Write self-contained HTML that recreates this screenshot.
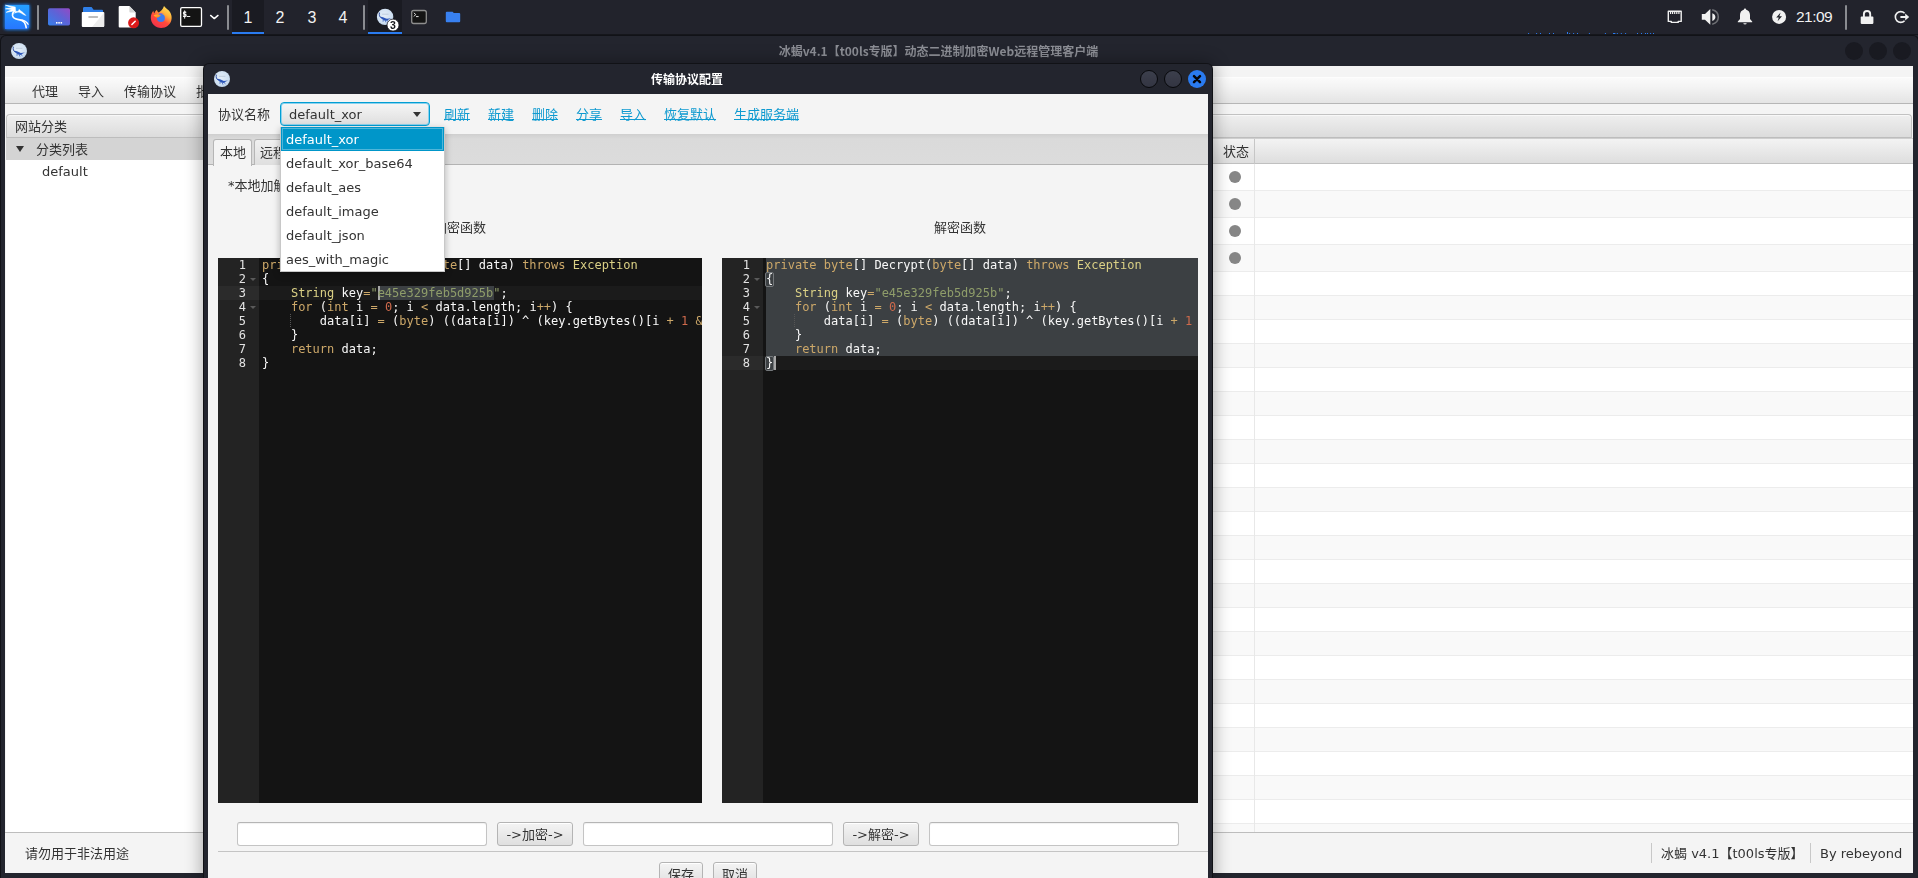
<!DOCTYPE html>
<html lang="zh-CN">
<head>
<meta charset="utf-8">
<title>冰蝎v4.1</title>
<style>
*{box-sizing:border-box;margin:0;padding:0}
html,body{width:1918px;height:878px;overflow:hidden;background:#23252e}
body{position:relative;font-family:"DejaVu Sans","Liberation Sans","Noto Sans CJK SC",sans-serif;font-size:13px;color:#333;line-height:1}
.abs{position:absolute}
.t{position:absolute;white-space:nowrap;line-height:20px;height:20px;padding-top:1px}
/* ---------- top panel ---------- */
#panel{position:absolute;left:0;top:0;width:1918px;height:35px;background:#22232c;border-bottom:1px solid #15161b}
.psep{position:absolute;top:5px;width:2px;height:25px;background:#8a8c91;border-radius:1px}
.ws{position:absolute;top:0;height:34px;width:32px;color:#f2f2f2;font-family:"Liberation Sans","DejaVu Sans",sans-serif;font-size:16px;line-height:36px;text-align:center}
.ws.on{background:#1a1b22;border-bottom:2px solid #2a7bf0;}
#clock{position:absolute;left:1796px;top:0;height:34px;line-height:33px;color:#f2f2f2;font-family:"Liberation Sans","DejaVu Sans",sans-serif;font-size:15.5px;letter-spacing:-0.55px}
/* ---------- main window ---------- */
#mw{position:absolute;left:1px;top:36px;width:1917px;height:842px;background:#23252e;border-radius:5px 5px 0 0;box-shadow:0 0 0 1px #111217}
#mwtitle{position:absolute;left:-1px;top:0;width:1918px;height:30px;text-align:center;color:#8c8e95;font-family:"Noto Sans CJK SC","Liberation Sans",sans-serif;font-weight:bold;font-size:12px;line-height:30px;padding-right:41px}
.wbtn{position:absolute;width:18px;height:18px;border-radius:50%}
#mc{position:absolute;left:4px;top:30px;width:1908px;height:807px;background:#f4f4f4;overflow:hidden}
#menubar{position:absolute;left:0;top:11px;width:1908px;height:27px;background:linear-gradient(#fbfbfb,#f3f3f3 40%,#e4e4e4);border-bottom:1px solid #b6b6b6;box-shadow:inset 0 1px 0 #fdfdfd}
.mi{position:absolute;top:5px;line-height:20px;white-space:nowrap}
.tph{position:absolute;top:48px;height:24px;background:linear-gradient(#efefef,#dcdcdc);border:1px solid #c2c2c2;border-bottom-color:#bdbdbd;box-shadow:inset 0 1px 0 #f8f8f8}
#tree{position:absolute;left:1px;top:72px;width:300px;height:695px;background:#fff}
#table{position:absolute;left:1208px;top:72px;width:700px;height:695px;background:#fff;overflow:hidden}
#thead{position:absolute;left:0;top:0;width:700px;height:26px;background:linear-gradient(#f3f3f3,#dedede);border-bottom:1px solid #c0c0c0;border-top:1px solid #cfcfcf}
.row{position:absolute;left:0;width:700px;border-bottom:1px solid #ececec}
.row.odd{background:#f9f9f9}
.dot{position:absolute;left:16px;top:6.5px;width:12px;height:12px;border-radius:50%;background:#868686}
#status{position:absolute;left:0;top:766px;width:1908px;height:41px;background:#f4f4f4;border-top:1px solid #bdbdbd}
/* ---------- dialog ---------- */
#dlg{position:absolute;left:204px;top:64px;width:1008px;height:820px;background:#23252e;border-radius:5px 5px 0 0;box-shadow:0 0 17px 2px rgba(0,0,0,.32), 0 0 0 1px #15161b}
#dtitle{position:absolute;left:0;top:0;width:1009px;height:30px;text-align:center;color:#fff;font-family:"Noto Sans CJK SC","Liberation Sans",sans-serif;font-weight:bold;font-size:12px;line-height:30px;padding-right:43px}
#dc{position:absolute;left:4px;top:30px;width:1000px;height:790px;background:#f4f4f4;overflow:hidden}
#tabhdr{position:absolute;left:0;top:40px;width:1000px;height:31px;background:linear-gradient(#cfcfcf,#dadada 5px,#dcdcdc);border-bottom:1px solid #b3b3b3}
.tab{position:absolute;top:5px;height:26px;border:1px solid #b6b6b6;border-bottom:none;border-radius:3px 3px 0 0;background:linear-gradient(#f0f0f0,#dfdfdf);line-height:26px;text-align:center}
.tab.sel{background:#f4f4f4;height:27px}
a.lk{position:absolute;top:11px;line-height:20px;color:#0f9ad0;text-decoration:underline;text-decoration-thickness:1px;text-underline-offset:0px;white-space:nowrap}
#combo{position:absolute;left:72px;top:8px;width:150px;height:24px;border-radius:4px;border:1.5px solid #039ed3;box-shadow:0 0 0 1px #8ad2ee inset;background:linear-gradient(#f6f6f6,#dedede);line-height:23px;padding-left:8px}
.ed{position:absolute;top:164px;height:545px;background:#141414;overflow:hidden;font-family:"DejaVu Sans Mono","Liberation Mono",monospace;font-size:12px;color:#f8f8f8}
.gut{position:absolute;left:0;top:0;width:41px;height:545px;background:#232323;color:#e2e2e2}
.ln{position:absolute;left:0;width:28px;text-align:right;height:14px;line-height:14px;will-change:transform}
.fold{position:absolute;left:32px;width:0;height:0;border-left:3px solid transparent;border-right:3px solid transparent;border-top:3px solid #5a5a5a}
.cl{position:absolute;left:44px;height:14px;line-height:14px;white-space:pre;will-change:transform}
.k{color:#cda869}.s{color:#8f9d6a}.n{color:#cf6a4c}.f{color:#dad085}
.sel{position:absolute;background:#3c4043}
.tf{position:absolute;top:728px;height:24px;width:250px;background:#fff;border:1px solid #c4c4c4;border-top-color:#b5b5b5;border-radius:3px;box-shadow:inset 0 1px 1px rgba(0,0,0,.06)}
.btn{position:absolute;height:24px;border:1px solid #b4b4b4;border-radius:3px;background:linear-gradient(#f4f4f4,#dfdfdf);text-align:center;line-height:23px;white-space:nowrap;box-shadow:inset 0 1px 0 #fff}
#pop{position:absolute;left:280px;top:127px;width:165px;height:145px;background:#fff;border:1px solid #c8c8c8;box-shadow:0 2px 7px rgba(0,0,0,.28)}
.pi{position:absolute;left:0;width:163px;height:24px;line-height:23px;padding-left:5px;white-space:nowrap}
.pi.on{margin-top:-1px;height:24px;line-height:26px;background:#0096c9;color:#fff;box-shadow:inset 0 0 0 1px #0096c9, inset 0 0 0 2px #4fb6da}
</style>
</head>
<body>

<!-- ================= TOP PANEL ================= -->
<div id="panel">
  <div class="psep" style="left:37px"></div>
  <div class="psep" style="left:227px"></div>
  <div class="psep" style="left:363px"></div>
  <div class="psep" style="left:1845px"></div>
  <div class="ws on" style="left:232px">1</div>
  <div class="ws" style="left:264px">2</div>
  <div class="ws" style="left:296px">3</div>
  <div class="ws" style="left:327px">4</div>
  <div class="ws on" style="left:368px;width:34px"></div>
  <div id="clock">21:09</div>
  <!--PANEL-ICONS--><svg class="abs" style="left:0;top:0;will-change:transform" width="480" height="36" viewBox="0 0 480 36"><defs>
<radialGradient id="disc" cx="45%" cy="40%" r="65%"><stop offset="0" stop-color="#e4eef8"/><stop offset="0.7" stop-color="#cfe0f1"/><stop offset="1" stop-color="#b9cfe6"/></radialGradient>
<linearGradient id="kg" x1="0" y1="0" x2="0" y2="1"><stop offset="0" stop-color="#25a0ff"/><stop offset="1" stop-color="#2777ff"/></linearGradient>
<linearGradient id="dg" x1="0" y1="1" x2="1" y2="0"><stop offset="0" stop-color="#3580ea"/><stop offset="0.55" stop-color="#5f62d6"/><stop offset="1" stop-color="#9549c4"/></linearGradient>
<linearGradient id="fx" x1="0.85" y1="0.05" x2="0.25" y2="1"><stop offset="0" stop-color="#ffe45a"/><stop offset="0.32" stop-color="#ffb03a"/><stop offset="0.6" stop-color="#ff4a3a"/><stop offset="1" stop-color="#f2304e"/></linearGradient>
<linearGradient id="fx2" x1="0" y1="0" x2="1" y2="1"><stop offset="0" stop-color="#ffbd2e"/><stop offset="1" stop-color="#ff7a1a"/></linearGradient>
<filter id="glow" x="-40%" y="-40%" width="180%" height="180%"><feGaussianBlur stdDeviation="1.6"/></filter>
</defs>
<!-- kali menu -->
<rect x="4" y="4" width="26" height="26" rx="3" fill="#1d86ff" filter="url(#glow)" opacity="0.85"/>
<path d="M5,5 H29.2 V26 a3,3 0 0 1 -3,3 H5 Z" fill="url(#kg)"/>
<g fill="none" stroke="#fff" stroke-linecap="round" stroke-linejoin="round">
<path d="M15,7 L5.5,5.2 L12.3,7.8 L5.5,8.8 L11.9,9.6 L6.2,12.3 L14.4,10.9 L15.4,9.6 Z" fill="#fff" stroke-width="0.6"/>
<path d="M15,10.4 C13.2,12 12.3,13.8 12.5,15.4 C12.9,18 15.2,19 17.6,19.4 C20.8,19.9 23.2,20.6 24.5,22.6 C25.6,24.4 26,26.2 26.2,27.7" stroke-width="1.6"/>
<path d="M15.4,10.8 C16.4,11.3 17.3,11.4 18.2,11.2 L19.1,9.2 L20.7,10.7 C21.8,11.4 22.8,12.2 23.6,13 C24.5,13.9 25.4,14.8 26.1,15.6 C25.2,15.5 24.2,15.1 23.2,14.5 C22.2,13.9 21.2,13.2 20.2,12.8 C19.2,12.4 18.2,12.3 17.2,12.4 C16.2,12.5 15.4,12.8 14.7,13.3 Z" fill="#fff" stroke-width="0.3"/>
<path d="M21.8,19.9 C24.4,20.4 26.8,21.8 28.1,24.3" stroke-width="1.25"/>
</g>
<!-- show desktop -->
<rect x="48" y="8.2" width="22" height="17.2" rx="1.6" fill="url(#dg)"/>
<rect x="56" y="22" width="1.5" height="1.6" fill="#fff"/><rect x="58.3" y="22" width="1.5" height="1.6" fill="#fff"/><rect x="60.6" y="22" width="1.5" height="1.6" fill="#fff"/>
<!-- file manager -->
<path d="M83,8.4 a1.4,1.4 0 0 1 1.4,-1.4 H91.6 L93.6,9.8 H102 a1,1 0 0 1 1,1 V13 H83 Z" fill="#2f7fe8"/>
<path d="M81.8,12.8 a0.8,0.8 0 0 1 0.8,-0.8 H103.4 a0.8,0.8 0 0 1 0.8,0.8 V26 a1,1 0 0 1 -1,1 H82.8 a1,1 0 0 1 -1,-1 Z" fill="#fff"/>
<path d="M104.2,12.4 V26 a1,1 0 0 1 -1,1 H92 Z" fill="#ededed"/>
<rect x="88.2" y="16" width="10" height="2" rx="1" fill="#bdbdbd"/>
<!-- text editor -->
<path d="M118.7,7.1 a1,1 0 0 1 1,-1 H129.4 L135.7,12.4 V26.4 a1,1 0 0 1 -1,1 H119.7 a1,1 0 0 1 -1,-1 Z" fill="#fff"/>
<path d="M129.4,6.1 L135.7,12.4 H130.4 a1,1 0 0 1 -1,-1 Z" fill="#d5d5d5"/>
<circle cx="133.6" cy="22.8" r="5.5" fill="#db1a1a"/>
<path d="M131.9,24.5 L135.2,21.2" stroke="#fff" stroke-width="1.5" stroke-linecap="round"/>
<!-- firefox -->
<path d="M164,6 C165.6,8.4 168.4,9.4 170,12 C171.6,14.4 172,17.4 171.4,20 C170.4,24.6 166.2,28 161.2,28 C155.4,28 150.8,23.4 150.8,17.8 C150.8,15 151.8,12.6 153.4,10.8 C153.4,12 153.8,12.8 154.4,13.4 C154.8,11.8 155.8,10.6 157,9.8 C157,11 157.6,12 158.8,12.4 C160.4,11.4 162.8,9.6 164,6 Z" fill="url(#fx)"/>
<circle cx="160.9" cy="18.1" r="4" fill="#3b7cf0"/>
<path d="M153.6,15.2 C155,14.6 156.6,14.4 158,14.6 C159.2,14.8 160.2,15.2 161,15.8 C160,16 159.4,16.4 159,17 C158.2,17.6 157.2,17.8 156.2,17.4 C155.2,17 154.2,16.2 153.6,15.2 Z" fill="url(#fx2)"/>
<path d="M158.6,13.6 C160.2,12.8 162.2,12.8 163.8,13.6 C162.4,13.6 161,14 160,14.6 Z" fill="#7a5be0" opacity=".85"/>
<!-- terminal -->
<rect x="180.7" y="7.6" width="20.8" height="18.7" rx="1.3" fill="#141414" stroke="#fff" stroke-width="1.3"/>
<text transform="translate(182.4,16.9) scale(0.86,1)" font-family="DejaVu Sans Mono,Liberation Mono,monospace" font-weight="bold" font-size="8.4" fill="#fff" stroke="#fff" stroke-width="0.35">$</text><text transform="translate(187.0,15.0) scale(0.62,1)" font-family="DejaVu Sans Mono,Liberation Mono,monospace" font-weight="bold" font-size="8.2" fill="#fff" stroke="#fff" stroke-width="0.3">_</text>
<path d="M210.6,15.4 L214.3,18.6 L218,15.4" fill="none" stroke="#fff" stroke-width="1.4" stroke-linecap="round" stroke-linejoin="round"/>
<!-- task: behinder -->
<g transform="translate(385.1,16.9)">
<circle r="8.2" fill="url(#disc)"/>
<path d="M-5.7,-3.9 C-6.1,-1.6 -5.6,0 -4.2,0.8" fill="none" stroke="#27469b" stroke-width="0.9" stroke-linecap="round"/>
<path d="M-4.7,-0.2 C-2.6,0 -0.2,0.9 1.8,1.9 L6.0,1.4 L3.4,2.7 C3.1,3.6 1.8,4.1 0.4,3.8 C-1.6,3.4 -4.2,1.8 -4.7,-0.2 Z" fill="#2b55b7"/>
<path d="M-1.8,2.8 L-2.0,4.4 M0.2,3.6 L0.8,5.2 M1.8,3.4 L3.2,4.6" stroke="#3560c0" stroke-width="0.8" stroke-linecap="round" fill="none"/>
<path d="M-3,-2.7 H3.4" stroke="#9fb0c4" stroke-width="0.5"/>
</g>
<circle cx="393" cy="25.1" r="6" fill="#fff" stroke="#1a1b22" stroke-width="0.8"/>
<text x="393" y="29" text-anchor="middle" font-family="Liberation Sans,DejaVu Sans,sans-serif" font-weight="bold" font-size="10.5" fill="#16171c">3</text>
<!-- task: terminal -->
<rect x="411.7" y="10.5" width="14.6" height="13" rx="2" fill="#141414" stroke="#8e8e8e" stroke-width="1.3"/>
<path d="M414,12.8 L415.6,14.6 L414,16.4 M416,16.6 H418.6" fill="none" stroke="#fff" stroke-width="0.9"/>
<!-- task: folder -->
<path d="M445.8,12.7 a1,1 0 0 1 1,-1 H452.6 L453.8,13.1 H459.2 a1,1 0 0 1 1,1 V21.2 a1,1 0 0 1 -1,1 H446.8 a1,1 0 0 1 -1,-1 Z" fill="#3880f0"/>
</svg><svg class="abs" style="left:1500px;top:0" width="418" height="36" viewBox="0 0 418 36">
<rect x="28.1" y="33" width="1" height="1" fill="#2a7bf0"/><rect x="36.1" y="33" width="1" height="1" fill="#2a7bf0"/><rect x="40.0" y="33" width="1" height="1" fill="#2a7bf0"/><rect x="49.0" y="33" width="1" height="1" fill="#2a7bf0"/><rect x="53.0" y="33" width="1" height="1" fill="#2a7bf0"/><rect x="69.1" y="33" width="1" height="1" fill="#2a7bf0"/><rect x="73.1" y="33" width="1" height="1" fill="#2a7bf0"/><rect x="77.0" y="33" width="1" height="1" fill="#2a7bf0"/><rect x="88.9" y="33" width="1" height="1" fill="#2a7bf0"/><rect x="104.9" y="33" width="1" height="1" fill="#2a7bf0"/><rect x="116.8" y="33" width="1" height="1" fill="#2a7bf0"/><rect x="120.8" y="33" width="1" height="1" fill="#2a7bf0"/><rect x="125.1" y="33" width="1" height="1" fill="#2a7bf0"/><rect x="137.0" y="33" width="1" height="1" fill="#2a7bf0"/><rect x="141.0" y="33" width="1" height="1" fill="#2a7bf0"/><rect x="145.0" y="33" width="1" height="1" fill="#2a7bf0"/><rect x="147.0" y="33" width="1" height="1" fill="#2a7bf0"/><rect x="150.1" y="33" width="1" height="1" fill="#2a7bf0"/><rect x="153.0" y="33" width="1" height="1" fill="#2a7bf0"/><rect x="67" y="32" width="1" height="2" fill="#2a7bf0"/><rect x="113" y="33" width="2.4" height="1" fill="#2a7bf0"/>
<g transform="translate(-1500,0)">
<!-- network -->
<path d="M1668.3,11.2 H1681.2 V21.4 H1678.2 V22.4 H1671.3 V21.4 H1668.3 Z" fill="none" stroke="#f1f1f1" stroke-width="1.4" stroke-linejoin="round"/>
<path d="M1670.6,11.6 V14 M1672.6,11.6 V14 M1674.7,11.6 V14 M1676.8,11.6 V14 M1678.9,11.6 V14" stroke="#f1f1f1" stroke-width="1.2"/>
<!-- volume -->
<path d="M1701.8,14 H1705 L1710.3,9 V24.8 L1705,19.8 H1701.8 Z" fill="#f1f1f1"/>
<path d="M1712.3,13.2 C1714.4,14 1715.4,15.4 1715.4,17 C1715.4,18.6 1714.4,20 1712.3,20.9 Z" fill="#f1f1f1"/>
<path d="M1712.2,9.8 C1716.2,10.8 1718.3,13.6 1718.3,17 C1718.3,20.4 1716.2,23.2 1712.2,24.2" fill="none" stroke="#6e6f74" stroke-width="1.5"/>
<!-- bell -->
<path d="M1745,8.6 C1745.8,8.6 1746.2,9.2 1746.2,9.8 C1748.6,10.4 1750,12.4 1750,15 V19 L1752.2,21.6 V22.3 H1737.8 V21.6 L1740,19 V15 C1740,12.4 1741.4,10.4 1743.8,9.8 C1743.8,9.2 1744.2,8.6 1745,8.6 Z" fill="#f1f1f1"/>
<path d="M1743.4,23.2 H1746.6 C1746.6,24 1745.9,24.4 1745,24.4 C1744.1,24.4 1743.4,24 1743.4,23.2 Z" fill="#f1f1f1"/>
<!-- power -->
<circle cx="1779.1" cy="16.9" r="7" fill="#f1f1f1"/>
<path d="M1780.6,12.6 L1776.2,17.6 H1778.8 L1777.6,21.2 L1782,16.2 H1779.4 Z" fill="#21232b"/>
<!-- lock -->
<rect x="1860.7" y="16.6" width="12.7" height="7.3" rx="0.8" fill="#f1f1f1"/>
<path d="M1863.9,17 V14.1 a3.15,3.15 0 0 1 6.3,0 V17" fill="none" stroke="#f1f1f1" stroke-width="1.9"/>
<!-- logout -->
<path d="M1904.6,13.2 A5.4,5.4 0 1 0 1904.6,20.8" fill="none" stroke="#f1f1f1" stroke-width="1.6"/>
<path d="M1900.4,15.9 H1905.2 V13.6 L1909.2,17 L1905.2,20.4 V18.1 H1900.4 Z" fill="#f1f1f1"/>
</g></svg><!--/PANEL-ICONS-->
</div>

<!-- ================= MAIN WINDOW ================= -->
<div id="mw">
  <div id="mwtitle">冰蝎v4.1【t00ls专版】动态二进制加密Web远程管理客户端</div>
  <div class="wbtn" style="left:1844px;top:6px;background:#191a21"></div>
  <div class="wbtn" style="left:1868px;top:6px;background:#191a21"></div>
  <div class="wbtn" style="left:1892px;top:6px;background:#191a21"></div>
  <!--MW-ICON--><svg class="abs" style="left:8px;top:5px" width="20" height="20" viewBox="-10 -10 20 20"><g transform="translate(0,0)">
<circle r="8" fill="url(#disc)"/>
<path d="M-5.7,-3.9 C-6.1,-1.6 -5.6,0 -4.2,0.8" fill="none" stroke="#27469b" stroke-width="0.9" stroke-linecap="round"/>
<path d="M-4.7,-0.2 C-2.6,0 -0.2,0.9 1.8,1.9 L6.0,1.4 L3.4,2.7 C3.1,3.6 1.8,4.1 0.4,3.8 C-1.6,3.4 -4.2,1.8 -4.7,-0.2 Z" fill="#2b55b7"/>
<path d="M-1.8,2.8 L-2.0,4.4 M0.2,3.6 L0.8,5.2 M1.8,3.4 L3.2,4.6" stroke="#3560c0" stroke-width="0.8" stroke-linecap="round" fill="none"/>
<path d="M-3,-2.7 H3.4" stroke="#9fb0c4" stroke-width="0.5"/>
</g></svg><!--/MW-ICON-->
  <div id="mc">
    <div id="menubar">
      <span class="mi" style="left:27px">代理</span>
      <span class="mi" style="left:73px">导入</span>
      <span class="mi" style="left:119px">传输协议</span>
      <span class="mi" style="left:191px">批</span>
    </div>
    <div class="tph" style="left:1px;width:300px;border-radius:4px 0 0 0"></div>
    <div class="tph" style="left:1100px;width:807px;border-radius:0 4px 0 0"></div>
    <span class="t" style="left:10px;top:50px">网站分类</span>
    <div id="tree">
      <div class="abs" style="left:0;top:0;width:300px;height:22px;background:#d4d4d4"></div>
      <div class="abs" style="left:10px;top:8px;width:0;height:0;border-left:4.5px solid transparent;border-right:4.5px solid transparent;border-top:6px solid #333"></div>
      <span class="t" style="left:30px;top:1px">分类列表</span>
      <span class="t" style="left:36px;top:23px">default</span>
    </div>
    <div id="table">
      <div id="thead">
        <span class="t" style="left:10px;top:2px">状态</span>
        <div class="abs" style="left:41px;top:0;width:1px;height:25px;background:#c6c6c6"></div>
      </div>
      <!--ROWS--><div class="row" style="top:26px;height:27px"><div class="dot"></div></div>
      <div class="row odd" style="top:53px;height:27px"><div class="dot"></div></div>
      <div class="row" style="top:80px;height:27px"><div class="dot"></div></div>
      <div class="row odd" style="top:107px;height:27px"><div class="dot"></div></div>
      <div class="row" style="top:134px;height:24px"></div>
      <div class="row odd" style="top:158px;height:24px"></div>
      <div class="row" style="top:182px;height:24px"></div>
      <div class="row odd" style="top:206px;height:24px"></div>
      <div class="row" style="top:230px;height:24px"></div>
      <div class="row odd" style="top:254px;height:24px"></div>
      <div class="row" style="top:278px;height:24px"></div>
      <div class="row odd" style="top:302px;height:24px"></div>
      <div class="row" style="top:326px;height:24px"></div>
      <div class="row odd" style="top:350px;height:24px"></div>
      <div class="row" style="top:374px;height:24px"></div>
      <div class="row odd" style="top:398px;height:24px"></div>
      <div class="row" style="top:422px;height:24px"></div>
      <div class="row odd" style="top:446px;height:24px"></div>
      <div class="row" style="top:470px;height:24px"></div>
      <div class="row odd" style="top:494px;height:24px"></div>
      <div class="row" style="top:518px;height:24px"></div>
      <div class="row odd" style="top:542px;height:24px"></div>
      <div class="row" style="top:566px;height:24px"></div>
      <div class="row odd" style="top:590px;height:24px"></div>
      <div class="row" style="top:614px;height:24px"></div>
      <div class="row odd" style="top:638px;height:24px"></div>
      <div class="row" style="top:662px;height:24px"></div>
      <div class="row odd" style="top:686px;height:24px"></div><!--/ROWS-->
      <div class="abs" style="left:41px;top:26px;width:1px;height:670px;background:#e8e8e8"></div>
    </div>
    <div id="status">
      <span class="t" style="left:20px;top:10px">请勿用于非法用途</span>
      <div class="abs" style="left:1646px;top:10px;width:1px;height:20px;background:#c8c8c8"></div>
      <span class="t" style="left:1656px;top:10px">冰蝎 v4.1【t00ls专版】</span>
      <div class="abs" style="left:1805px;top:10px;width:1px;height:20px;background:#c8c8c8"></div>
      <span class="t" style="left:1815px;top:10px">By rebeyond</span>
    </div>
  </div>
</div>

<!-- ================= DIALOG ================= -->
<div id="dlg">
  <div id="dtitle">传输协议配置</div>
  <div class="wbtn" style="left:936px;top:6px;background:linear-gradient(#3c3f4c,#333542);border:1.3px solid #08090c"></div>
  <div class="wbtn" style="left:960px;top:6px;background:linear-gradient(#3c3f4c,#333542);border:1.3px solid #08090c"></div>
  <div class="wbtn" style="left:984px;top:6px;background:#2a7bf0"></div>
  <svg class="abs" style="left:984px;top:6px" width="18" height="18" viewBox="0 0 18 18"><path d="M6 6.1 L12 12.1 M12 6.1 L6 12.1" stroke="#05060a" stroke-width="2.5" stroke-linecap="round"/></svg>
  <!--DLG-ICON--><svg class="abs" style="left:8px;top:5px" width="20" height="20" viewBox="-10 -10 20 20"><g transform="translate(0,0)">
<circle r="8" fill="url(#disc)"/>
<path d="M-5.7,-3.9 C-6.1,-1.6 -5.6,0 -4.2,0.8" fill="none" stroke="#27469b" stroke-width="0.9" stroke-linecap="round"/>
<path d="M-4.7,-0.2 C-2.6,0 -0.2,0.9 1.8,1.9 L6.0,1.4 L3.4,2.7 C3.1,3.6 1.8,4.1 0.4,3.8 C-1.6,3.4 -4.2,1.8 -4.7,-0.2 Z" fill="#2b55b7"/>
<path d="M-1.8,2.8 L-2.0,4.4 M0.2,3.6 L0.8,5.2 M1.8,3.4 L3.2,4.6" stroke="#3560c0" stroke-width="0.8" stroke-linecap="round" fill="none"/>
<path d="M-3,-2.7 H3.4" stroke="#9fb0c4" stroke-width="0.5"/>
</g></svg><!--/DLG-ICON-->
  <div id="dc">
    <span class="t" style="left:10px;top:10px">协议名称</span>
    <div id="combo">default_xor
      <div class="abs" style="right:8px;top:9px;width:0;height:0;border-left:4.5px solid transparent;border-right:4.5px solid transparent;border-top:5px solid #333"></div>
    </div>
    <a class="lk" style="left:236px">刷新</a>
    <a class="lk" style="left:280px">新建</a>
    <a class="lk" style="left:324px">删除</a>
    <a class="lk" style="left:368px">分享</a>
    <a class="lk" style="left:412px">导入</a>
    <a class="lk" style="left:456px">恢复默认</a>
    <a class="lk" style="left:526px">生成服务端</a>
    <div id="tabhdr">
      <div class="tab sel" style="left:5px;width:39px;padding-left:1px">本地</div>
      <div class="tab" style="left:46px;width:38px">远程</div>
    </div>
    <span class="t" style="left:20px;top:81px">*本地加解密函数</span>
    <span class="t" style="left:200px;top:123px;width:104px;text-align:center">加密函数</span>
    <span class="t" style="left:700px;top:123px;width:104px;text-align:center">解密函数</span>
    <!--EDITORS--><div class="ed" style="left:10px;width:484px">
    <div class="abs" style="left:41px;top:28px;width:900px;height:14px;background:#1b1b1b"></div>
    <div class="sel" style="left:160px;top:28px;width:116px;height:14px"></div>
    <div class="abs" style="left:160px;top:28px;width:2px;height:14px;background:#a7a7a7"></div>
    <div class="abs" style="left:72px;top:56px;width:1px;height:14px;background:repeating-linear-gradient(#555 0 1px,transparent 1px 2px)"></div>
    <div class="cl" style="top:0px"><span class="k">private</span> <span class="k">byte</span>[] Encrypt(<span class="k">byte</span>[] data) <span class="k">throws</span> <span class="f">Exception</span></div>
    <div class="cl" style="top:14px">{</div>
    <div class="cl" style="top:28px">    <span class="f">String</span> key<span class="k">=</span><span class="s">"e45e329feb5d925b"</span>;</div>
    <div class="cl" style="top:42px">    <span class="k">for</span> (<span class="k">int</span> i <span class="k">=</span> <span class="n">0</span>; i <span class="k">&lt;</span> data.length; i<span class="k">++</span>) {</div>
    <div class="cl" style="top:56px">        data[i] <span class="k">=</span> (<span class="k">byte</span>) ((data[i]) ^ (key.getBytes()[i <span class="k">+</span> <span class="n">1</span> <span class="k">&amp;</span> <span class="n">15</span>]));</div>
    <div class="cl" style="top:70px">    }</div>
    <div class="cl" style="top:84px">    <span class="k">return</span> data;</div>
    <div class="cl" style="top:98px">}</div>
    <div class="gut">
    <div class="abs" style="left:0;top:28px;width:41px;height:14px;background:#2b2b2b"></div>
    <div class="ln" style="top:0px">1</div>
    <div class="ln" style="top:14px">2</div>
    <div class="ln" style="top:28px">3</div>
    <div class="ln" style="top:42px">4</div>
    <div class="ln" style="top:56px">5</div>
    <div class="ln" style="top:70px">6</div>
    <div class="ln" style="top:84px">7</div>
    <div class="ln" style="top:98px">8</div>
    <div class="fold" style="top:20px"></div>
    <div class="fold" style="top:48px"></div>
    </div></div>
    <div class="ed" style="left:514px;width:476px">
    <div class="abs" style="left:41px;top:98px;width:900px;height:14px;background:#1b1b1b"></div>
    <div class="sel" style="left:44px;top:0;width:900px;height:98px"></div>
    <div class="sel" style="left:44px;top:98px;width:8px;height:14px"></div>
    <div class="abs" style="left:43px;top:14px;width:9px;height:15px;border:1px solid #74787b;border-radius:2px"></div>
    <div class="abs" style="left:43px;top:98px;width:9px;height:15px;border:1px solid #74787b;border-radius:2px"></div>
    <div class="abs" style="left:52px;top:98px;width:2px;height:14px;background:#a7a7a7"></div>
    <div class="abs" style="left:72px;top:56px;width:1px;height:14px;background:repeating-linear-gradient(#555 0 1px,transparent 1px 2px)"></div>
    <div class="cl" style="top:0px"><span class="k">private</span> <span class="k">byte</span>[] Decrypt(<span class="k">byte</span>[] data) <span class="k">throws</span> <span class="f">Exception</span></div>
    <div class="cl" style="top:14px">{</div>
    <div class="cl" style="top:28px">    <span class="f">String</span> key<span class="k">=</span><span class="s">"e45e329feb5d925b"</span>;</div>
    <div class="cl" style="top:42px">    <span class="k">for</span> (<span class="k">int</span> i <span class="k">=</span> <span class="n">0</span>; i <span class="k">&lt;</span> data.length; i<span class="k">++</span>) {</div>
    <div class="cl" style="top:56px">        data[i] <span class="k">=</span> (<span class="k">byte</span>) ((data[i]) ^ (key.getBytes()[i <span class="k">+</span> <span class="n">1</span> <span class="k">&amp;</span> <span class="n">15</span>]));</div>
    <div class="cl" style="top:70px">    }</div>
    <div class="cl" style="top:84px">    <span class="k">return</span> data;</div>
    <div class="cl" style="top:98px">}</div>
    <div class="gut">
    <div class="abs" style="left:0;top:98px;width:41px;height:14px;background:#2b2b2b"></div>
    <div class="ln" style="top:0px">1</div>
    <div class="ln" style="top:14px">2</div>
    <div class="ln" style="top:28px">3</div>
    <div class="ln" style="top:42px">4</div>
    <div class="ln" style="top:56px">5</div>
    <div class="ln" style="top:70px">6</div>
    <div class="ln" style="top:84px">7</div>
    <div class="ln" style="top:98px">8</div>
    <div class="fold" style="top:20px"></div>
    <div class="fold" style="top:48px"></div>
    </div></div><!--/EDITORS-->
    <div class="tf" style="left:29px"></div>
    <div class="btn" style="left:289px;top:728px;width:76px">-&gt;加密-&gt;</div>
    <div class="tf" style="left:375px"></div>
    <div class="btn" style="left:635px;top:728px;width:76px">-&gt;解密-&gt;</div>
    <div class="tf" style="left:721px"></div>
    <div class="abs" style="left:10px;top:757px;width:990px;height:1px;background:#c4c4c4"></div>
    <div class="btn" style="left:451px;top:768px;width:44px">保存</div>
    <div class="btn" style="left:505px;top:768px;width:44px">取消</div>
  </div>
</div>

<!-- ================= COMBO POPUP ================= -->
<div id="pop">
  <div class="pi on" style="top:0">default_xor</div>
  <div class="pi" style="top:24px">default_xor_base64</div>
  <div class="pi" style="top:48px">default_aes</div>
  <div class="pi" style="top:72px">default_image</div>
  <div class="pi" style="top:96px">default_json</div>
  <div class="pi" style="top:120px">aes_with_magic</div>
</div>

</body>
</html>
